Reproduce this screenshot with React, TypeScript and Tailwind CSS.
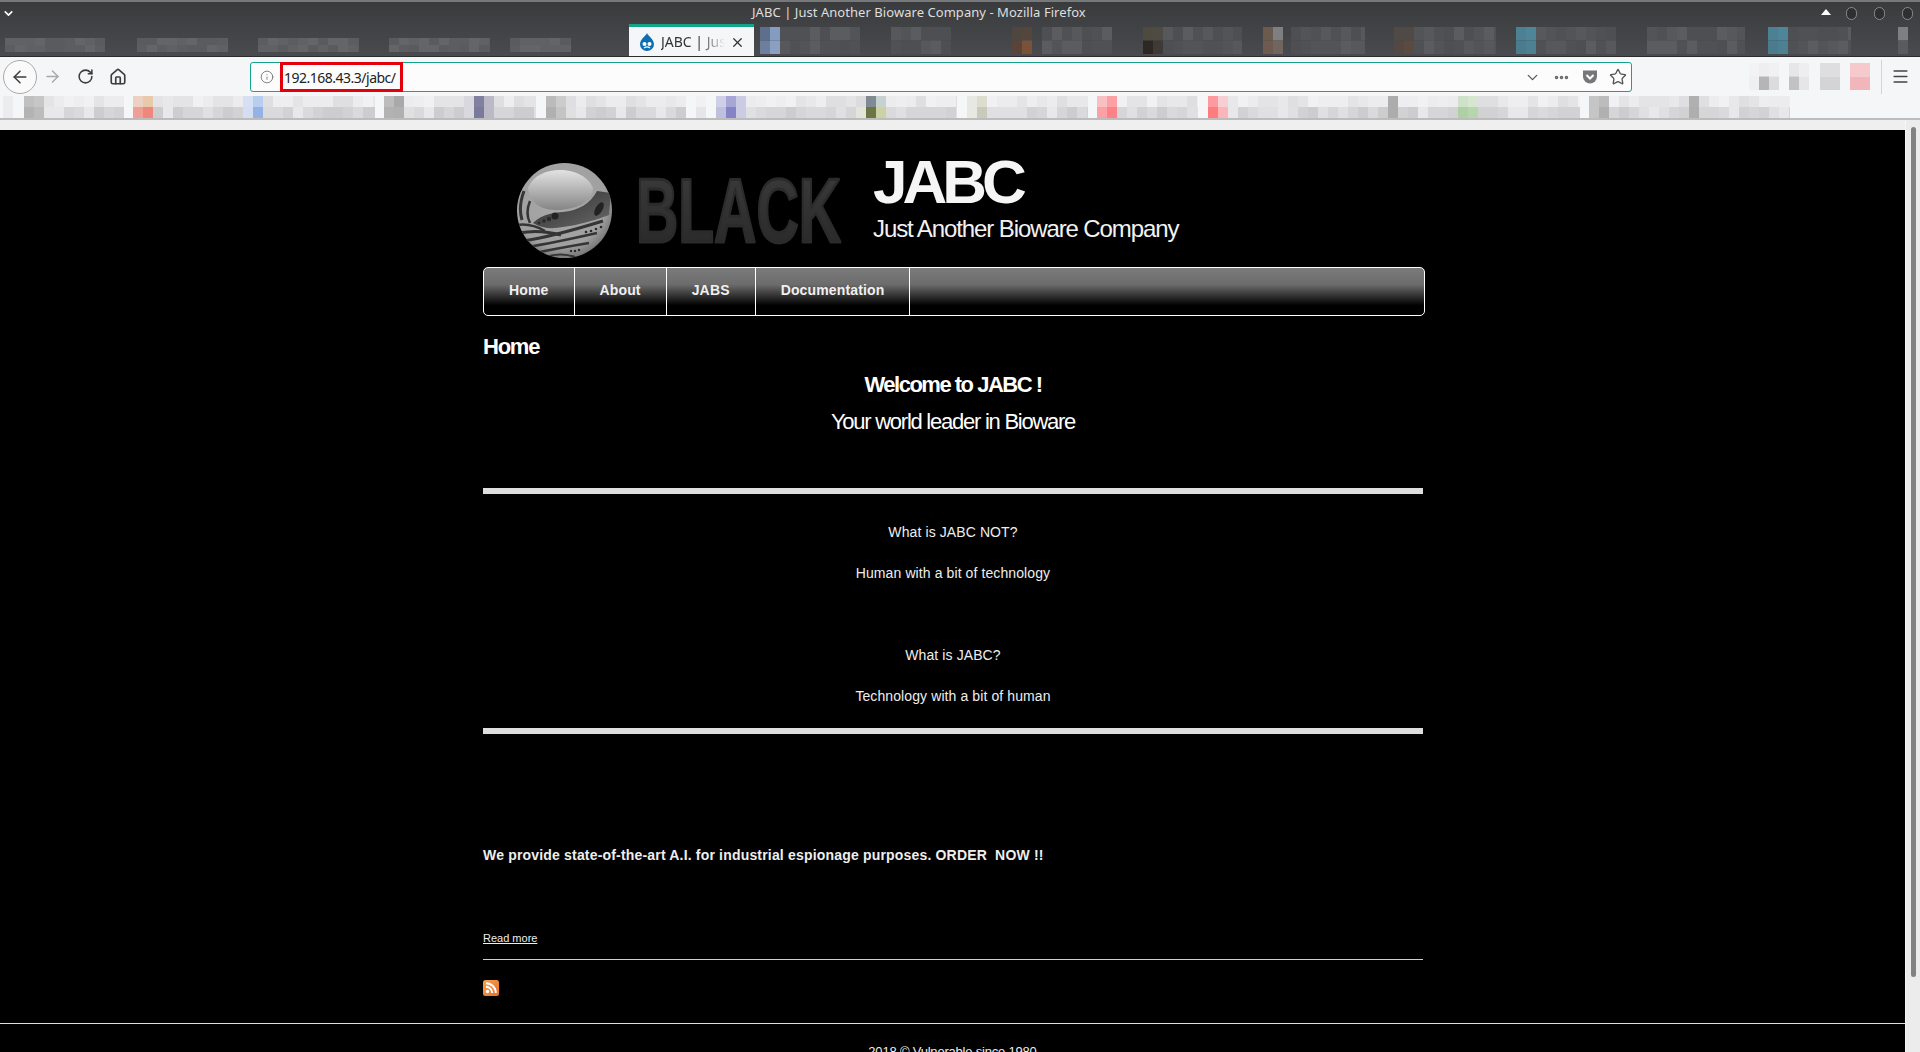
import { ArrowLeft, ArrowRight, ChevronDown, Home, Info, Menu, MoreHorizontal, RotateCw, Star, X } from "lucide-react"

type Range = [number, number]
type Accents = Record<number, [string, string]>

const hash = (n: number) => {
    const v = Math.sin(n * 12.9898) * 43758.5453
    return v - Math.floor(v)
}

// blurred-out strip, 10px cells in two rows
function Mosaic({ from, to, height, groups, accents, palette, lower, className }: {
    from: number; to: number; height: number; groups: Range[]; accents: Accents; palette: string[]; lower?: string[]; className?: string
}) {
    const bottom = lower ?? palette
    const cells = []
    for (const [a, b] of groups) {
        for (let x = a; x < b; x += 10) {
            const w = Math.min(10, b - x)
            const acc = accents[x]
            const top = acc ? acc[0] : palette[Math.floor(hash(x) * palette.length)]
            const bot = acc ? acc[1] : bottom[Math.floor(hash(x + 7) * bottom.length)]
            cells.push(<rect key={x + "t"} x={x - from} y={0} width={w} height={height / 2} fill={top} />)
            cells.push(<rect key={x + "b"} x={x - from} y={height / 2} width={w} height={height / 2} fill={bot} />)
        }
    }
    return (
        <svg width={to - from} height={height} className={className}>
            {cells}
        </svg>
    )
}

const bookmarkGroups: Range[] = [[3, 13], [24, 124], [133, 375], [384, 536], [546, 686], [696, 706], [716, 957], [967, 1088], [1097, 1198], [1208, 1580], [1589, 1790]]
const bookmarkAccents: Accents = {
    3: ["#ececee", "#ececee"],
    24: ["#c0c0c0", "#b3b3b4"], 34: ["#c6c6c6", "#bcbcbc"],
    133: ["#ecd0c2", "#ef9f95"], 143: ["#e8c9ac", "#f0877c"],
    243: ["#d5e0f5", "#d3def3"], 253: ["#b9cdee", "#94b2e4"],
    384: ["#bcbcbc", "#b2b2b2"], 394: ["#a9a9a9", "#b0b0b0"],
    464: ["#d9d7e0", "#d9d7e0"], 474: ["#8180a0", "#7a7a9c"], 484: ["#bbb8c8", "#bbb8c8"],
    546: ["#bbbbbb", "#b0b0b0"], 556: ["#cccccc", "#c4c4c4"],
    696: ["#f1f1f3", "#e6e6e8"],
    716: ["#cfd0e8", "#bfc0e0"], 726: ["#a7a6d4", "#8584c6"], 736: ["#cbcbe4", "#cbcbe4"],
    856: ["#dcdcde", "#e2e6da"], 866: ["#7f8a92", "#6e7544"], 876: ["#c5d2d0", "#ccd2a4"],
    967: ["#e8e8e2", "#e8e8e2"], 977: ["#ddddcf", "#cacabc"],
    1097: ["#f9c0c4", "#fca0a8"], 1107: ["#fda0a4", "#fd8288"],
    1208: ["#fd9aa0", "#fd7c80"], 1218: ["#f6cfd2", "#fcb4b8"],
    1388: ["#acacac", "#acacac"],
    1458: ["#cfe2c9", "#aed0a4"], 1468: ["#d6e6cf", "#b7d6ae"],
    1589: ["#c5c5c5", "#c5c5c5"], 1599: ["#bcbcbc", "#b0b0b0"],
    1689: ["#b0b0b0", "#aeaeae"],
}
const bookmarkTop = ["#f1f1f3", "#eeeef0", "#ececee", "#e8e8ea", "#e4e4e6", "#dfdfe1"]
const bookmarkBottom = ["#e8e8ea", "#e0e0e2", "#dadadc", "#d6d6d8", "#d2d2d4", "#cdcdcf"]

const tabCells = ["#505154", "#535457", "#57585b", "#5b5c5f", "#4e4f52"]
const rightTabAccents: Accents = {
    760: ["#5c6f8e", "#6d7f9c"], 770: ["#859cc2", "#8ba0c0"],
    1012: ["#4f4640", "#5a4338"], 1022: ["#53463c", "#7a523a"],
    1143: ["#4f4a40", "#2e2824"], 1153: ["#4e4b44", "#3f3a35"],
    1263: ["#6b5a4e", "#6e5a50"], 1273: ["#7d7f81", "#6f6660"],
    1394: ["#4f4a46", "#534842"], 1404: ["#4f4a46", "#5a4a42"],
    1516: ["#4c8093", "#4a7c8e"], 1526: ["#4f8598", "#4c8093"],
    1768: ["#4c8093", "#4a7c8e"], 1778: ["#4f8598", "#4c8093"],
    1898: ["#7e7f81", "#5a5b5e"],
}
const rightTabGroups: Range[] = [[760, 860], [891, 951], [1012, 1032], [1042, 1112], [1143, 1242], [1263, 1283], [1291, 1365], [1394, 1496], [1516, 1616], [1647, 1745], [1768, 1851], [1898, 1908]]

const stripes: [string, number][] = [
    ["M41 28 Q35 44 39 57", 3],
    ["M47 38 Q42 50 47 60", 2.5],
    ["M34 62 Q48 60 62 68", 2.5],
    ["M36 70 Q56 66 78 72", 3],
    ["M40 78 Q68 74 120 58", 3],
    ["M44 84 Q70 80 114 70", 2.5],
    ["M52 90 Q76 85 106 80", 2.5],
    ["M62 94 Q78 89 92 94", 2],
]

function Logo() {
    return (
        <g>
            <defs>
                <radialGradient id="ball" cx="45%" cy="40%" r="65%">
                    <stop offset="0%" stopColor="#a8a8a8" />
                    <stop offset="75%" stopColor="#a0a0a0" />
                    <stop offset="100%" stopColor="#6a6a6a" />
                </radialGradient>
                <linearGradient id="gloss" x1="0" y1="0" x2="0" y2="1">
                    <stop offset="0%" stopColor="#e2e2e2" />
                    <stop offset="100%" stopColor="#858585" />
                </linearGradient>
                <linearGradient id="swoosh" x1="0" y1="0" x2="1" y2="1">
                    <stop offset="0%" stopColor="#2b2b2b" />
                    <stop offset="100%" stopColor="#6a6a6a" />
                </linearGradient>
                <linearGradient id="blackFill" x1="0" y1="0" x2="0" y2="1">
                    <stop offset="0%" stopColor="#3c3c3c" />
                    <stop offset="100%" stopColor="#272727" />
                </linearGradient>
                <clipPath id="ballClip"><circle cx="81.5" cy="47.5" r="47.5" /></clipPath>
            </defs>
            <circle cx="81.5" cy="47.5" r="47.5" fill="url(#ball)" />
            <g clipPath="url(#ballClip)">
                <path d="M50 60 C60 50 72 50 80 49 C95 48 108 40 114 28 L128 30 L126 52 C110 58 95 62 80 64 C70 66 60 66 50 60Z" fill="url(#swoosh)" />
                <path d="M45 25 C50 12 64 7 77 7 C92 7 106 14 110 25 C110 36 98 44 84 46 C72 48 70 47 64 46 C54 44 46 36 45 25Z" fill="url(#gloss)" />
                {stripes.map(([d, w]) => (
                    <path key={d} d={d} fill="none" stroke="#353535" strokeWidth={w} />
                ))}
                <ellipse cx="116" cy="46" rx="3.5" ry="7.5" transform="rotate(30 116 46)" fill="#222" />
                <circle cx="72" cy="53" r="3.5" fill="#222" />
                <circle cx="66" cy="56" r="2.2" fill="#2a2a2a" />
                <circle cx="61" cy="58" r="1.8" fill="#2a2a2a" />
                <circle cx="56" cy="60" r="1.3" fill="#2a2a2a" />
                <circle cx="118" cy="64" r="1.3" fill="#2a2a2a" />
                <circle cx="113" cy="66" r="1.3" fill="#2a2a2a" />
                <circle cx="108" cy="68" r="1.3" fill="#2a2a2a" />
                <circle cx="103" cy="69" r="1.3" fill="#2a2a2a" />
                <circle cx="88" cy="88" r="1.2" fill="#2a2a2a" />
                <circle cx="92" cy="88" r="1.2" fill="#2a2a2a" />
                <circle cx="96" cy="87" r="1.2" fill="#2a2a2a" />
            </g>
            <text x={153} y={79} fontFamily="'Liberation Sans', sans-serif" fontWeight="700" fontSize="90" textLength={205} lengthAdjust="spacingAndGlyphs" fill="url(#blackFill)" stroke="#2b2b2b" strokeWidth="3" strokeLinejoin="round">BLACK</text>
        </g>
    )
}

function Rss() {
    return (
        <svg width="16" height="16" viewBox="0 0 16 16" className="block">
            <defs>
                <linearGradient id="rssBg" x1="0" y1="0" x2="1" y2="1">
                    <stop offset="0%" stopColor="#f7a24d" />
                    <stop offset="100%" stopColor="#e8702a" />
                </linearGradient>
            </defs>
            <rect width="16" height="16" rx="2.5" fill="url(#rssBg)" />
            <circle cx="4.5" cy="11.5" r="1.7" fill="#fff" />
            <path d="M3 6.8 A6.2 6.2 0 0 1 9.2 13" fill="none" stroke="#fff" strokeWidth="2" />
            <path d="M3 3.2 A9.8 9.8 0 0 1 12.8 13" fill="none" stroke="#fff" strokeWidth="2" />
        </svg>
    )
}

const navItems = ["Home", "About", "JABS", "Documentation"]

export default function App() {
    return (
        <div className="h-[1052px] overflow-hidden bg-black flex flex-col font-['Liberation_Sans',Arial,sans-serif]">
            {/* window title + tabs */}
            <div className="h-[57px] shrink-0 bg-gradient-to-b from-[#3a3b3d] to-[#4a4b4e] border-t-2 border-t-[#77787a] flex flex-col font-['Noto_Sans',sans-serif]">
                <div className="h-[22px] shrink-0 flex items-center text-[#dedede] text-[13px] tracking-[0.05px] relative">
                    <ChevronDown size={13} className="ml-[2px] text-white" strokeWidth={3} />
                    <span className="ml-[737px]">JABC | Just Another Bioware Company - Mozilla Firefox</span>
                    <span className="ml-auto flex items-center">
                        <span className="w-0 h-0 border-x-[5px] border-x-transparent border-b-[6px] border-b-white mr-[15px] mb-[2px]" />
                        <span className="w-[11px] h-[13px] rounded-full bg-[#2f2f31] border border-[#8a8b8d] mr-[17px]" />
                        <span className="w-[11px] h-[13px] rounded-full bg-[#2f2f31] border border-[#8a8b8d] mr-[17px]" />
                        <span className="w-[11px] h-[13px] rounded-full bg-[#2f2f31] border border-[#8a8b8d] mr-[7px]" />
                    </span>
                </div>
                <div className="flex-1 flex items-stretch">
                    <div className="w-[629px] shrink-0 pt-[14px] pl-[5px]">
                        <Mosaic from={5} to={629} height={14} palette={["#5c5d60", "#606164", "#646568", "#5a5b5e"]} accents={{}}
                            groups={[[5, 105], [137, 228], [258, 359], [389, 490], [510, 571]]} className="block" />
                    </div>
                    <div className="w-[125px] shrink-0 bg-[#f5f6f7] border-t-[3px] border-t-[#12a58a] flex items-center pl-[10px] relative text-[14px] text-[#333]">
                        <svg width="16" height="18" viewBox="0 0 16 18">
                            <path d="M8 0 C9 3 15 6 15 11.5 A7 6.5 0 0 1 1 11.5 C1 6 7 3 8 0Z" fill="#0d6fb3" />
                            <circle cx="5.5" cy="11" r="2" fill="#fff" />
                            <circle cx="10.5" cy="11" r="2" fill="#fff" />
                            <path d="M5 15 C7 13.5 9 13.5 11 15" stroke="#fff" strokeWidth="1.2" fill="none" />
                        </svg>
                        <span className="ml-[6px] w-[64px] overflow-hidden whitespace-nowrap [mask-image:linear-gradient(to_right,black_60%,transparent)]">JABC | Just Another</span>
                        <X size={15} className="absolute right-[9px] top-[8px] text-[#333]" strokeWidth={2} />
                    </div>
                    <div className="flex-1 pt-[3px] ml-[6px] overflow-hidden">
                        <Mosaic from={760} to={1920} height={27} palette={tabCells} accents={rightTabAccents} groups={rightTabGroups} className="block" />
                    </div>
                </div>
                <div className="h-px bg-[#2b2c2e] shrink-0" />
            </div>

            {/* toolbar */}
            <div className="h-[63px] shrink-0 bg-[#f5f6f7] border-b-2 border-b-[#bcbcbc] flex flex-col">
                <div className="h-[39px] shrink-0 flex items-center text-[#3d3d3f] relative">
                    <div className="ml-[3px] w-[34px] h-[34px] rounded-full border border-[#aaa] bg-[#fafafa] flex items-center justify-center">
                        <ArrowLeft size={20} strokeWidth={1.8} />
                    </div>
                    <ArrowRight size={19} strokeWidth={1.8} className="ml-[6px] text-[#a9a9ab]" />
                    <RotateCw size={17} strokeWidth={2.2} className="ml-[15px]" />
                    <Home size={18} strokeWidth={2.2} className="ml-[15px]" />
                    <div className="absolute left-[250px] top-[5px] w-[1382px] h-[30px] rounded-[3px] border border-[#12a58a] bg-[#fcfcfc] flex items-center">
                        <Info size={14} strokeWidth={1.4} className="ml-[9px] text-[#6a6a6c]" />
                        <span className="ml-[10px] text-[14px] text-[#222] font-['Noto_Sans',sans-serif] tracking-[-0.5px]">192.168.43.3/jabc/</span>
                        <ChevronDown size={17} strokeWidth={1.8} className="ml-auto text-[#555]" />
                        <MoreHorizontal size={17} strokeWidth={3} className="ml-[12px] text-[#666]" />
                        <svg width="16" height="16" viewBox="0 0 16 16" className="ml-[12px]">
                            <path d="M1 1.5 H15 V7.5 A7 7 0 0 1 1 7.5Z" fill="#77777a" />
                            <path d="M4.5 6 L8 9.5 L11.5 6" fill="none" stroke="#fff" strokeWidth="2" />
                        </svg>
                        <Star size={18} strokeWidth={1.8} className="ml-[11px] mr-[4px] text-[#555]" />
                        {/* red annotation box */}
                        <div className="absolute left-[29px] top-[-1px] w-[123px] h-[30px] border-[3px] border-[#e3000b]" />
                    </div>
                    <div className="ml-auto flex items-center">
                        <Mosaic from={1750} to={1873} height={27} palette={["#f1f1f3", "#e9e9eb", "#c9c9cb", "#b5b5b7"]}
                            accents={{ 1851: ["#f6c9cc", "#f2b6ba"], 1861: ["#f6c9cc", "#f2b6ba"], 1750: ["#f3f3f5", "#f0f0f2"], 1760: ["#eeeef0", "#b5b5b7"], 1770: ["#f1f1f3", "#dcdcde"], 1790: ["#e6e6e8", "#c2c2c4"], 1800: ["#eeeef0", "#e6e6e8"], 1821: ["#dedee0", "#d4d4d6"], 1831: ["#dedee0", "#d4d4d6"] }}
                            groups={[[1750, 1780], [1790, 1810], [1821, 1841], [1851, 1871]]} className="block" />
                        <div className="w-px h-[34px] bg-[#d4d4d6] ml-[9px]" />
                        <Menu size={19} strokeWidth={2} className="ml-[9px] mr-[10px] text-[#444]" />
                    </div>
                </div>
                <Mosaic from={0} to={1920} height={22} palette={bookmarkTop} lower={bookmarkBottom} accents={bookmarkAccents} groups={bookmarkGroups} className="block" />
            </div>

            <div className="flex-1 flex min-h-0">
                {/* page */}
                <div className="flex-1 min-w-0 flex flex-col">
                    <div className="h-[10px] shrink-0 bg-[#efefef]" />
                    <div className="flex-1 text-white">
                        <div className="ml-[483px] w-[940px]">
                            <div className="h-[137px] flex">
                                <svg width="390" height="95" viewBox="0 0 390 95" className="mt-[33px] shrink-0 overflow-visible">
                                    <Logo />
                                </svg>
                                <div className="mt-[22px]">
                                    <div className="text-[62px] leading-[60px] font-bold tracking-[-5px] text-[#f5f5f5]">JABC</div>
                                    <div className="mt-[2px] text-[24px] leading-[30px] tracking-[-1.1px] text-[#f2f2f2]">Just Another Bioware Company</div>
                                </div>
                            </div>
                            <div className="h-[49px] w-[942px] flex border border-white rounded-[5px] bg-[linear-gradient(#7b7b7b_0%,#6c6c6c_35%,#000_80%,#000_100%)]">
                                {navItems.map((item) => (
                                    <div key={item} className="px-[25px] border-r border-r-white flex items-center pb-[2px] text-[14px] font-bold text-[#f0f0f0] tracking-[0.15px]">
                                        {item}
                                    </div>
                                ))}
                            </div>
                            <h2 className="mt-[16px] text-[22px] leading-[30px] font-bold tracking-[-1.25px]">Home</h2>
                            <div className="mt-[8px] text-center text-[22px] leading-[30px] font-bold tracking-[-1.5px]">Welcome to JABC !</div>
                            <div className="mt-[7px] text-center text-[22px] leading-[30px] tracking-[-1.25px]">Your world leader in Bioware</div>
                            <div className="mt-[51px] h-[6px] bg-[#dedede]" />
                            <p className="mt-[28px] text-center text-[14px] leading-[20px] text-[#eee] tracking-[0.1px]">What is JABC NOT?</p>
                            <p className="mt-[21px] text-center text-[14px] leading-[20px] text-[#eee] tracking-[0.1px]">Human with a bit of technology</p>
                            <p className="mt-[62px] text-center text-[14px] leading-[20px] text-[#eee] tracking-[0.1px]">What is JABC?</p>
                            <p className="mt-[21px] text-center text-[14px] leading-[20px] text-[#eee] tracking-[0.1px]">Technology with a bit of human</p>
                            <div className="mt-[22px] h-[6px] bg-[#dedede]" />
                            <p className="mt-[111px] text-[14px] leading-[20px] font-bold text-[#eee] whitespace-pre tracking-[0.18px]">We provide state-of-the-art A.I. for industrial espionage purposes. ORDER  NOW !!</p>
                            <a className="block mt-[65px] text-[11px] leading-[16px] underline text-[#eee]">Read more</a>
                            <div className="mt-[13px] h-px bg-[#cfcfcf]" />
                            <div className="mt-[20px]"><Rss /></div>
                        </div>
                        <div className="mt-[27px] h-px bg-[#dedede]" />
                        <p className="mt-[18px] text-center text-[13px] leading-[20px] text-[#eee] tracking-[-0.2px]">2018 © Vulnerable since 1980</p>
                    </div>
                </div>
                {/* scrollbar */}
                <div className="w-[15px] shrink-0 bg-[#ececec] border-l border-l-[#f7f7f7] pt-[7px] pl-[5px]">
                    <div className="w-[5px] h-[850px] rounded-full bg-[#828282]" />
                </div>
            </div>
        </div>
    )
}
